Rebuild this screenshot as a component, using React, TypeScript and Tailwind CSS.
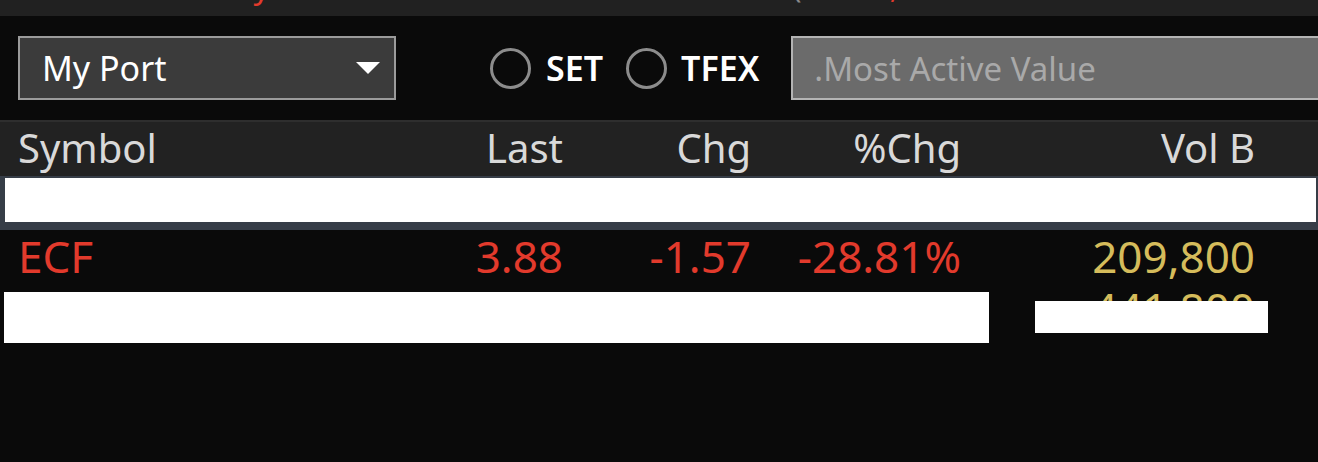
import React from 'react';

interface Row {
  symbol: string;
  last: string;
  chg: string;
  pct: string;
  vol: string;
}

// second row is masked in the source, only its volume peeks out
const rows: Row[] = [
  { symbol: 'ECF', last: '3.88', chg: '-1.57', pct: '-28.81%', vol: '209,800' },
  { symbol: '', last: '', chg: '', pct: '', vol: '441,800' },
];

const font = { fontFamily: '"Noto Sans", "Open Sans", sans-serif' };

const Cols: React.FC<{ cells: string[]; className?: string; volClass?: string }> = ({ cells, className, volClass }) => (
  <div className={`flex pl-[18px] ${className ?? ''}`}>
    <div className="w-[345px]">{cells[0]}</div>
    <div className="w-[200px] text-right">{cells[1]}</div>
    <div className="w-[188px] text-right">{cells[2]}</div>
    <div className="w-[210px] text-right">{cells[3]}</div>
    <div className={`w-[294px] text-right ${volClass ?? ''}`}>{cells[4]}</div>
  </div>
);

const App: React.FC = () => {
  return (
    <div className="w-[1318px] h-[462px] bg-[#0a0a0a] overflow-hidden" style={font}>
      {/* clipped summary line from the panel above */}
      <div className="h-[16px] bg-[#212121] overflow-hidden">
        <div className="flex -mt-[30px] text-[32px] leading-none whitespace-nowrap">
          <span className="ml-[242px] text-[#e23a2c]">ty</span>
          <span className="ml-[522px] text-[#8a8a8a]">(</span>
          <span className="ml-[70px] text-[#e23a2c]">7,009.99</span>
          <span className="ml-[20px] text-[#e23a2c]">-</span>
        </div>
      </div>

      {/* filter bar */}
      <div className="h-[104px] flex items-center overflow-hidden">
        <div className="ml-[18px] w-[378px] h-[64px] shrink-0 border-2 border-[#9b9b9b] bg-[#3b3b3b] flex items-center justify-between pl-[22px] pr-[14px]">
          <span className="text-white text-[34px] leading-none">My Port</span>
          <svg width="24" height="12" viewBox="0 0 24 12">
            <path d="M0 0h24L12 12z" fill="#ffffff" />
          </svg>
        </div>
        <div className="ml-[94px] flex items-center shrink-0">
          <span className="w-[41px] h-[41px] rounded-full border-[3px] border-[#8c8c8c]" />
          <span className="ml-[15px] text-white text-[34px] font-semibold leading-none">SET</span>
          <span className="ml-[23px] w-[41px] h-[41px] rounded-full border-[3px] border-[#8c8c8c]" />
          <span className="ml-[14px] text-white text-[34px] font-semibold leading-none">TFEX</span>
        </div>
        <div className="ml-[32px] w-[560px] h-[64px] shrink-0 border-2 border-[#b4b4b4] bg-[#6b6b6b] flex items-center pl-[21px]">
          <span className="text-[#a9a9a9] text-[33px] leading-none">.Most Active Value</span>
        </div>
      </div>

      {/* table */}
      <div className="border-t-2 border-[#2e2e2e]">
        <Cols
          cells={['Symbol', 'Last', 'Chg', '%Chg', 'Vol B']}
          className="h-[54px] bg-[#222222] text-[#d9d9d9] text-[40px] leading-[52px]"
        />
        <div className="h-[54px] bg-[#363d47] p-[2px] pl-[5px] pr-[2px] pb-[8px]">
          <div className="h-full bg-white" />
        </div>
        {rows.map((r, i) => (
          <div key={i} className="relative">
            <Cols
              cells={[r.symbol, r.last, r.chg, r.pct, r.vol]}
              className="h-[52px] text-[#e23a2c] text-[44px] leading-[52px]"
              volClass="text-[#d5bc5b]"
            />
            {i === 1 && (
              <>
                <div className="absolute left-[4px] top-[10px] w-[985px] h-[51px] bg-white" />
                <div className="absolute left-[1035px] top-[19px] w-[233px] h-[32px] bg-white" />
              </>
            )}
          </div>
        ))}
      </div>
    </div>
  );
};

export default App;
